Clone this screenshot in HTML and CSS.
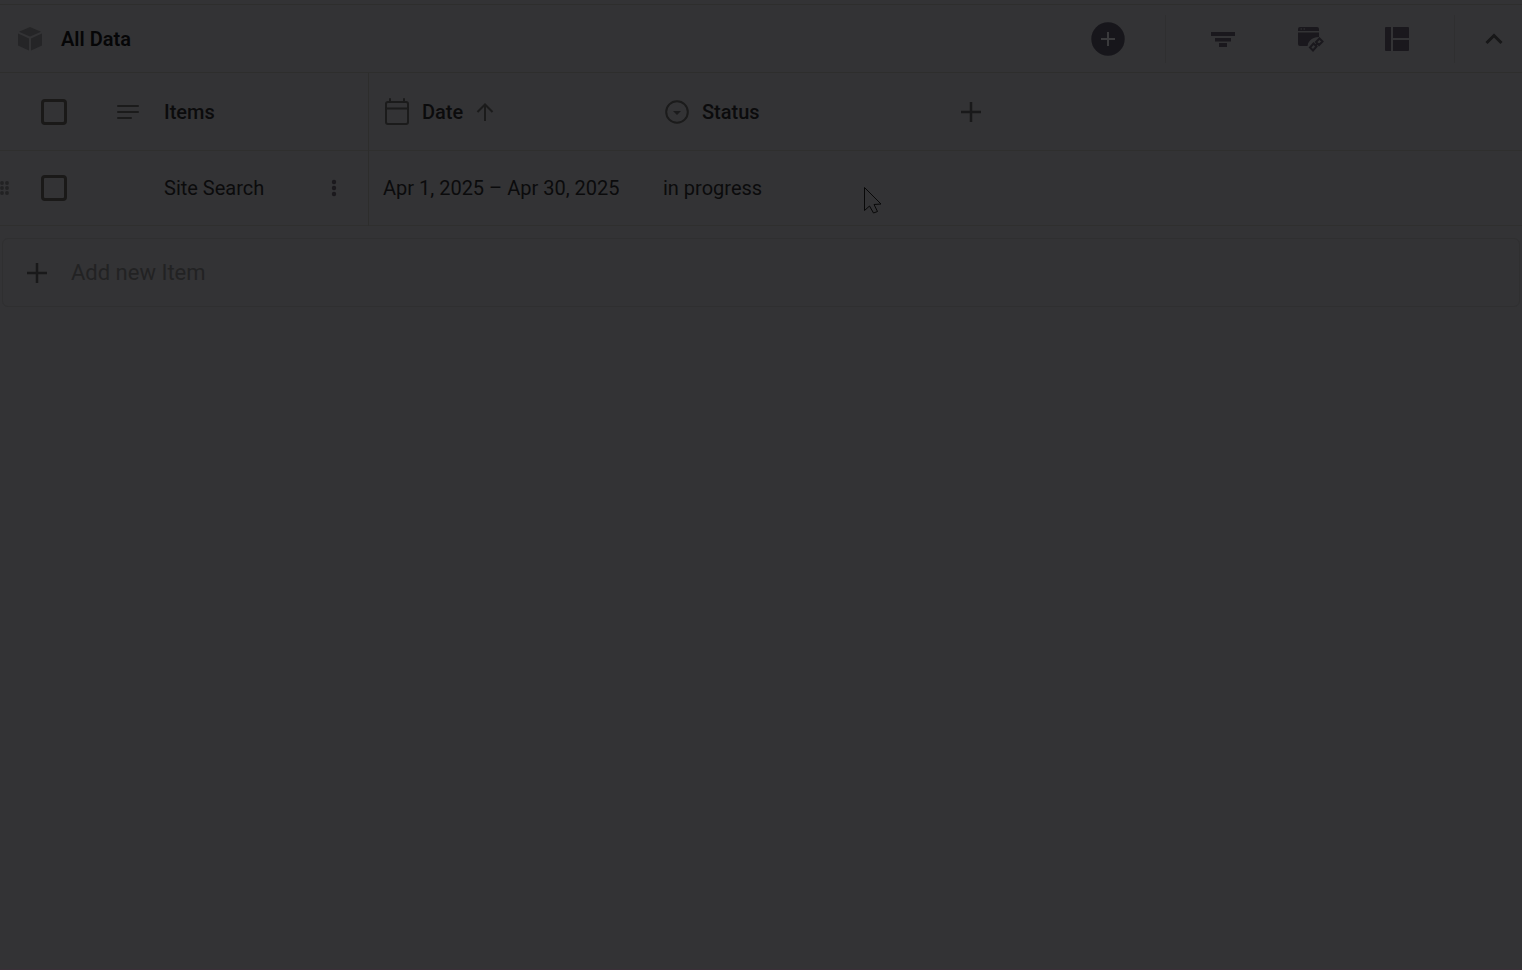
FILE: index.html
```html
<!DOCTYPE html>
<html lang="en">
<head>
<meta charset="utf-8">
<title>All Data</title>
<link rel="stylesheet" href="styles.css">
</head>
<body>
<header class="toolbar">
  <svg class="cube" width="24" height="24" viewBox="0 0 24 24"><path d="M12 0 23 4.700 12 9.500 1 4.700zM0 6.600 11 11.400V23.500L0 18.500zM24 6.600 13 11.400V23.500L24 18.500z"/></svg>
  <h1 class="title">All Data</h1>
  <div class="tools">
    <button class="add" type="button" aria-label="Add"><svg width="34" height="34" viewBox="0 0 34 34"><circle cx="17" cy="17" r="16.700"/><path class="add-plus" d="M17 10v14M10 17h14"/></svg></button>
    <span class="divider"></span>
    <div class="views">
      <button type="button" aria-label="Filter"><svg width="24" height="24" viewBox="0 0 24 24"><path d="M0 5h24v4H0zM4 11h16v3.500H4zM8 16h8v4H8z"/></svg></button>
      <button type="button" aria-label="Linked view"><svg width="28" height="28" viewBox="0 0 28 28"><path d="M4 2h17q2 0 2 2v2H2V4q0-2 2-2zM2 7.500h21V12q-6 0-9 3.500-2.500 2.500-2.500 5.500H4q-2 0-2-2z"/><path class="dots" d="M4.500 4h1.500M7.500 4H9"/><path class="chain" d="m17.500 18.500 3 3-3.500 4-3-3zM23.500 13.500l3 3-3.500 3.500-3-3zM19 21l2.500-2.500"/></svg></button>
      <button type="button" aria-label="Layout"><svg width="24" height="24" viewBox="0 0 24 24"><path d="M1 0h5v24H1q-1 0-1-1V1q0-1 1-1zM8 0h15q1 0 1 1v10H8zM8 13h16v10q0 1-1 1H8z"/></svg></button>
    </div>
    <span class="divider"></span>
    <button class="collapse" type="button" aria-label="Collapse"><svg width="18" height="24" viewBox="0 0 18 24"><path class="chevron" d="m1.500 16 7.500-7.500L16.500 16"/></svg></button>
  </div>
</header>
<main>
  <table class="grid">
    <colgroup><col class="col-check"><col class="col-name"><col class="col-data"><col class="col-data"><col></colgroup>
    <thead>
      <tr>
        <th><div class="cell check"><input type="checkbox" aria-label="Select all"></div></th>
        <th class="name"><div class="cell items"><svg class="line" width="22" height="24" viewBox="0 0 22 24"><path d="M1 6h20M1 12h20M1 18h13"/></svg>Items</div></th>
        <th><div class="cell"><svg class="line" width="26" height="28" viewBox="0 0 26 28"><rect x="3" y="4" width="22" height="22" rx="2"/><path d="M3 10.500h22M7 1v3M21 1v3"/></svg>Date<svg class="line sort" width="18" height="18" viewBox="0 0 18 18"><path d="M9 18V2M1.500 9 9 1.500 16.500 9"/></svg></div></th>
        <th><div class="cell"><svg class="line" width="26" height="26" viewBox="0 0 26 26"><circle cx="14" cy="13" r="10.800"/><path class="solid" d="M10 12h8l-4 4z"/></svg>Status</div></th>
        <th><div class="cell"><button class="add-column" type="button" aria-label="Add column"><svg class="plus" width="20" height="20" viewBox="0 0 20 20"><path d="M10 0v20M0 10h20"/></svg></button></div></th>
      </tr>
    </thead>
    <tbody>
      <tr>
        <td><div class="cell check"><svg class="drag" width="9" height="14" viewBox="0 0 9 14"><circle cx="2" cy="2" r="1.900"/><circle cx="7" cy="2" r="1.900"/><circle cx="2" cy="7" r="1.900"/><circle cx="7" cy="7" r="1.900"/><circle cx="2" cy="12" r="1.900"/><circle cx="7" cy="12" r="1.900"/></svg><input type="checkbox" aria-label="Select Site Search"></div></td>
        <td class="name"><div class="cell item">Site Search<button type="button" aria-label="Item menu"><svg width="6" height="18" viewBox="0 0 6 18"><circle cx="3" cy="3" r="2.200"/><circle cx="3" cy="9" r="2.200"/><circle cx="3" cy="15" r="2.200"/></svg></button></div></td>
        <td><div class="cell">Apr 1, 2025 – Apr 30, 2025</div></td>
        <td><div class="cell">in progress</div></td>
        <td></td>
      </tr>
    </tbody>
  </table>
  <label class="new-item">
    <svg class="plus" width="20" height="20" viewBox="0 0 20 20"><path d="M10 0v20M0 10h20"/></svg>
    <input type="text" placeholder="Add new Item" aria-label="Add new Item">
  </label>
</main>
<svg class="pointer" width="20" height="28" viewBox="0 0 20 28"><path d="M1.500 1.500v23l5-4.500 4 7 4-1.500-3.500-7 7-.5z"/></svg>
</body>
</html>
```
FILE: styles.css
```css
* {
  box-sizing: border-box;
}

body {
  margin: 0;
  min-height: 100vh;
  padding-top: 4px;
  background: #333335;
  border-bottom: 1px solid #3b2f38;
  color: #0b0b0c;
  font: 20px/24px Roboto, sans-serif;
}

svg {
  display: block;
  flex: none;
}

button {
  display: block;
  padding: 0;
  border: 0;
  background: none;
  color: inherit;
}

button svg {
  fill: #1b191d;
}

.toolbar {
  display: flex;
  align-items: center;
  height: 69px;
  padding: 0 19px 0 18px;
  border-top: 1px solid #2e2e2d;
  border-bottom: 1px solid #2e2e2d;
}

.cube {
  fill: #252527;
}

.title {
  margin: 0 0 0 19px;
  color: #060607;
  font-size: 20px;
  font-weight: 600;
}

.tools {
  display: flex;
  align-items: center;
  margin-left: auto;
}

.add {
  margin-right: 40px;
}

.add svg {
  fill: #17161b;
}

.add-plus {
  fill: none;
  stroke: #3a3a3c;
  stroke-width: 2;
}

.divider {
  width: 1px;
  height: 48px;
  background: #2f2f30;
}

.views {
  display: flex;
  align-items: center;
  gap: 61px;
  margin: 0 45px;
}

.views svg {
  fill: #1a181d;
}

.views .dots {
  stroke: #333335;
  stroke-width: 1;
}

.views .chain {
  fill: none;
  stroke: #1a181d;
  stroke-width: 2;
}

.collapse {
  margin-left: 30px;
}

.chevron {
  fill: none;
  stroke: #171718;
  stroke-width: 3;
}

.grid {
  width: 100%;
  table-layout: fixed;
  border-collapse: separate;
  border-spacing: 0;
}

.col-check {
  width: 100px;
}

.col-name {
  width: 269px;
}

.col-data {
  width: 280px;
}

th,
td {
  padding: 0;
  border-bottom: 1px solid #2f2f2e;
  text-align: left;
}

th {
  height: 78px;
  font-weight: 500;
}

td {
  height: 75px;
}

.name {
  border-right: 1px solid #2d2d2c;
}

.cell {
  display: flex;
  align-items: center;
  padding-left: 14px;
  gap: 13px;
}

.check {
  justify-content: flex-end;
  padding: 0 33px 0 0;
  gap: 32px;
}

.check input {
  appearance: none;
  width: 26px;
  height: 26px;
  margin: 0;
  border: 3px solid #1a1918;
  border-radius: 4px;
}

.items {
  padding-left: 17px;
  gap: 25px;
}

.item {
  justify-content: space-between;
  padding: 0 31px 0 64px;
}

.drag {
  fill: #222223;
}

.line {
  fill: none;
  stroke: #1b1b1b;
  stroke-width: 2;
  stroke-linecap: round;
}

.line .solid {
  fill: #1b1b1c;
  stroke: none;
}

.sort {
  stroke-linecap: butt;
}

.plus {
  fill: none;
  stroke: #19191a;
  stroke-width: 2.5;
}

.add-column {
  margin-left: 18px;
}

.add-column svg {
  fill: none;
}

.new-item {
  display: flex;
  align-items: center;
  gap: 24px;
  height: 69px;
  margin: 12px 2px 0;
  padding-left: 24px;
  border: 1px solid #2f2f30;
  border-radius: 6px;
}

.new-item input {
  flex: 1;
  min-width: 0;
  padding: 0;
  border: 0;
  outline: 0;
  background: none;
  color: #0b0b0c;
  font: 22px/28px Roboto, sans-serif;
}

.new-item input::placeholder {
  color: #222223;
  opacity: 1;
}

.pointer {
  position: absolute;
  top: 186px;
  left: 863px;
  fill: #333335;
  stroke: #080808;
  stroke-width: 1;
}
```
